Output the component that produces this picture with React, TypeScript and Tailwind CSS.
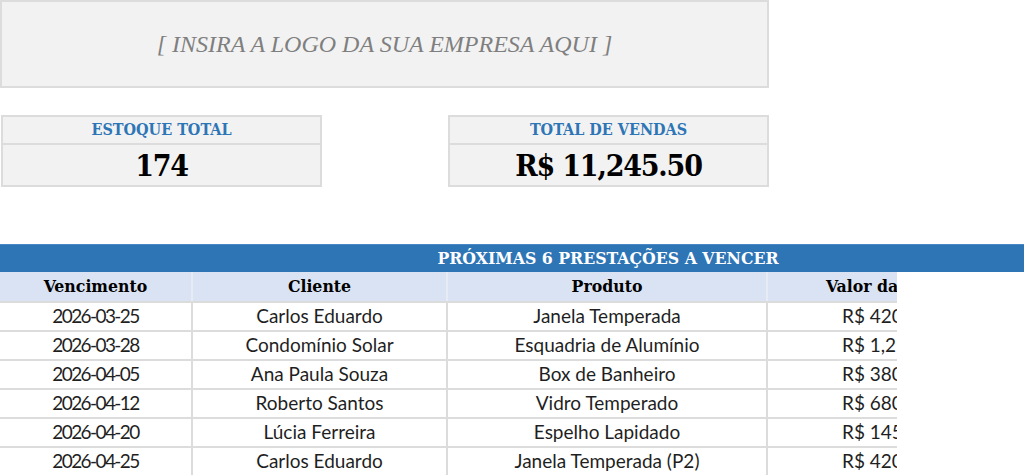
import React from "react";

const serif = "font-['DejaVu_Serif_Condensed','DejaVu_Serif',serif]";
const sans = "font-['Lato','Carlito',sans-serif]";

const parcelas = [
  { vencimento: "2026-03-25", cliente: "Carlos Eduardo", produto: "Janela Temperada", valor: "R$ 420.00" },
  { vencimento: "2026-03-28", cliente: "Condomínio Solar", produto: "Esquadria de Alumínio", valor: "R$ 1,250.00" },
  { vencimento: "2026-04-05", cliente: "Ana Paula Souza", produto: "Box de Banheiro", valor: "R$ 380.00" },
  { vencimento: "2026-04-12", cliente: "Roberto Santos", produto: "Vidro Temperado", valor: "R$ 680.00" },
  { vencimento: "2026-04-20", cliente: "Lúcia Ferreira", produto: "Espelho Lapidado", valor: "R$ 145.00" },
  { vencimento: "2026-04-25", cliente: "Carlos Eduardo", produto: "Janela Temperada (P2)", valor: "R$ 420.00" },
];

function KpiCard({ label, value }: { label: string; value: string }) {
  return (
    <div className="w-[321px] border-2 border-[#dcdcdc] bg-[#f2f2f2]">
      <div
        className={`flex h-[28px] items-center justify-center border-b-2 border-[#dcdcdc] text-[16px] font-bold text-[#2e75b6] ${serif}`}
      >
        {label}
      </div>
      <div
        className={`flex h-[40px] items-center justify-center text-[30px] font-bold tracking-[-1.2px] text-black ${serif}`}
      >
        {value}
      </div>
    </div>
  );
}

export default function App() {
  return (
    <div className="h-[476px] w-[1024px] overflow-hidden bg-white">
      <div className="flex h-[88px] w-[769px] items-center justify-center border-2 border-[#dcdcdc] bg-[#f2f2f2]">
        <span className="font-['Liberation_Serif',serif] text-[24px] italic text-[#7f7f7f]">
          [ INSIRA A LOGO DA SUA EMPRESA AQUI ]
        </span>
      </div>

      <div className="mt-[27px] flex gap-[126px] pl-[1px]">
        <KpiCard label="ESTOQUE TOTAL" value="174" />
        <KpiCard label="TOTAL DE VENDAS" value="R$ 11,245.50" />
      </div>

      <div className="mt-[57px]">
        <div
          className={`flex h-[28px] items-center justify-center border-t border-[#4a86c5] bg-[#2e75b6] pl-[192px] text-[17.5px] font-bold text-white ${serif}`}
        >
          PRÓXIMAS 6 PRESTAÇÕES A VENCER
        </div>
        <div className="w-[897px] overflow-hidden">
          <div className="w-[1014px]">
            <div className={`flex h-[29px] bg-[#dae3f3] text-[17.5px] font-bold text-black ${serif}`}>
              <div className="flex w-[193px] items-center justify-center border-r-2 border-[#e6ebf4]">Vencimento</div>
              <div className="flex w-[255px] items-center justify-center border-r-2 border-[#e6ebf4]">Cliente</div>
              <div className="flex w-[320px] items-center justify-center border-r-2 border-[#e6ebf4]">Produto</div>
              <div className="flex w-[246px] items-center pl-[58px]">Valor da Parcela</div>
            </div>
            {parcelas.map((p) => (
              <div
                key={p.vencimento}
                className={`flex h-[29px] border-t-2 border-[#dcdcdc] text-[19px] text-[#1f1f1f] ${sans}`}
              >
                <div className="flex w-[193px] items-center justify-center border-r-2 border-[#dcdcdc] tracking-[-1.6px]">
                  {p.vencimento}
                </div>
                <div className="flex w-[255px] items-center justify-center border-r-2 border-[#dcdcdc]">{p.cliente}</div>
                <div className="flex w-[320px] items-center justify-center border-r-2 border-[#dcdcdc]">{p.produto}</div>
                <div className="flex w-[246px] items-center pl-[74px]">{p.valor}</div>
              </div>
            ))}
          </div>
        </div>
      </div>
    </div>
  );
}
